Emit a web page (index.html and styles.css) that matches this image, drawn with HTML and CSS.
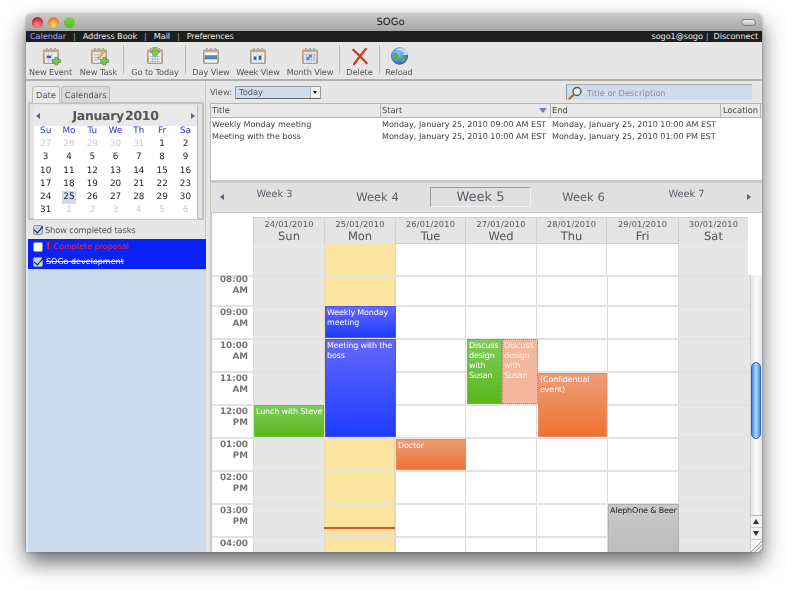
FILE: index.html
```html
<!DOCTYPE html>
<html lang="en">
<head>
<meta charset="utf-8">
<title>SOGo</title>
<link rel="stylesheet" href="styles.css">
</head>
<body>
<svg class="defs" width="0" height="0" aria-hidden="true">
  <defs>
    <linearGradient id="tan" x1="0" y1="0" x2="0" y2="1"><stop offset="0" stop-color="#d8b48a"/><stop offset="1" stop-color="#a98a66"/></linearGradient>
    <radialGradient id="globe" cx=".4" cy=".35" r=".7"><stop offset="0" stop-color="#8fd0f5"/><stop offset="1" stop-color="#1a5cb0"/></radialGradient>
    <symbol id="cal" viewBox="0 0 20 20">
      <rect x="1" y="3" width="18" height="16.5" rx="1" fill="url(#tan)" stroke="#8e7a62" stroke-width=".6"/>
      <rect x="2.5" y="6" width="15" height="12.5" fill="#eef2f8"/>
      <g stroke="#5a5a5a" stroke-width="1" fill="none"><path d="M5 .8v3.6M10 .8v3.6M15 .8v3.6"/></g>
      <g fill="#fff" stroke="#777" stroke-width=".4"><circle cx="5" cy="3" r="1"/><circle cx="10" cy="3" r="1"/><circle cx="15" cy="3" r="1"/></g>
    </symbol>
    <symbol id="plus" viewBox="0 0 10 10">
      <path d="M3.4.6h3.2v2.8h2.8v3.2H6.6v2.8H3.4V6.600H.6V3.400h2.800z" fill="#7cc65c" stroke="#3f8a2a" stroke-width=".7"/>
    </symbol>
  </defs>
</svg>
<div class="window">
  <header class="titlebar">
    <div class="lights"><i class="light red"></i><i class="light amber"></i><i class="light green"></i></div>
    <div class="title">SOGo</div>
    <i class="pill"></i>
  </header>
  <nav class="menubar">
    <div class="menu-left"><a class="current">Calendar</a><b>|</b><a>Address Book</a><b>|</b><a>Mail</a><b>|</b><a>Preferences</a></div>
    <div class="menu-right"><a>sogo1@sogo</a><b>|</b><a>Disconnect</a></div>
  </nav>
  <div class="toolbar">
    <div class="tool w-event">
      <svg class="icon" viewBox="0 0 24 22"><use href="#cal" x="2" y="0" width="20" height="20"/><path d="M6 9h8M6 12h8M6 15h8M9 7v10M13 7v10" stroke="#9fb3d8" stroke-width=".6"/><rect x="7" y="10" width="5" height="3" fill="#2f5fb0"/><use href="#plus" x="13" y="11" width="11" height="11"/></svg>
      <span>New Event</span>
    </div>
    <div class="tool w-task">
      <svg class="icon" viewBox="0 0 24 22"><use href="#cal" x="2" y="0" width="20" height="20"/><path d="M6 9h6M6 12h6M6 15h4" stroke="#7b8aa0" stroke-width=".8"/><path d="M10 14 L17 3 L19.500 4.500 L12 15.500z" fill="#e7c04f" stroke="#8a6d2b" stroke-width=".5"/><use href="#plus" x="13" y="11" width="11" height="11"/></svg>
      <span>New Task</span>
    </div>
    <i class="sep"></i>
    <div class="tool w-today">
      <svg class="icon" viewBox="0 0 24 22"><use href="#cal" x="2" y="0" width="20" height="20"/><path d="M6 11h12M6 14h12M6 17h12M9 8v10M12 8v10M15 8v10" stroke="#88a0cc" stroke-width=".7"/><path d="M9.500 0h5v5h3.500l-6 6.500-6-6.500h3.500z" fill="#84c85e" stroke="#47902f" stroke-width=".6"/></svg>
      <span>Go to Today</span>
    </div>
    <i class="sep"></i>
    <div class="tool w-day">
      <svg class="icon" viewBox="0 0 24 22"><use href="#cal" x="2" y="0" width="20" height="20"/><rect x="5" y="10" width="14" height="4" fill="#5a86c8" stroke="#2f5fa8" stroke-width=".5"/></svg>
      <span>Day View</span>
    </div>
    <div class="tool w-week">
      <svg class="icon" viewBox="0 0 24 22"><use href="#cal" x="2" y="0" width="20" height="20"/><path d="M7 7v11M10 7v11M13 7v11M16 7v11" stroke="#9fb3d8" stroke-width=".6"/><rect x="7" y="11" width="3" height="4" fill="#2f5fa8"/><rect x="13" y="10" width="3" height="5" fill="#2f5fa8"/></svg>
      <span>Week View</span>
    </div>
    <div class="tool w-month">
      <svg class="icon" viewBox="0 0 24 22"><use href="#cal" x="2" y="0" width="20" height="20"/><path d="M5 9h14M5 12h14M5 15h14M8 7v11M11 7v11M14 7v11M17 7v11" stroke="#88a0cc" stroke-width=".7"/><rect x="11" y="9" width="3" height="3" fill="#4a76bc"/><rect x="8" y="12" width="3" height="3" fill="#4a76bc"/></svg>
      <span>Month View</span>
    </div>
    <i class="sep"></i>
    <div class="tool w-delete">
      <svg class="icon" viewBox="0 0 24 22"><path d="M4 3 Q12 10 20 19 M19 2 Q12 10 5 20" fill="none" stroke="#cf3a28" stroke-width="2.800" stroke-linecap="round"/></svg>
      <span>Delete</span>
    </div>
    <i class="sep"></i>
    <div class="tool w-reload">
      <svg class="icon globe-icon" viewBox="0 0 24 22"><circle cx="12" cy="11" r="9.500" fill="url(#globe)"/><path d="M5 9c3-3 5-1 6 1s-2 4-3 6c-2-1-3-4-3-7zM14 13c2-1 5-1 6-1-1 3-3 5-5 6-1-2-2-3-1-5z" fill="#5fae3f"/><path d="M8 4c4-3 9-2 12 2l1-2v6h-6l2-2c-2-3-6-4-9-4z" fill="#bfe4fa"/></svg>
      <span>Reload</span>
    </div>
  </div>
  <div class="content">
    <aside class="sidebar">
      <div class="tabs"><span class="tab active">Date</span><span class="tab">Calendars</span></div>
      <div class="datebox">
        <div class="minical">
          <div class="mini-head"><i class="tri left"></i><div class="mini-title"><span>January</span> <span>2010</span></div><i class="tri right"></i></div>
          <div class="mini-grid">
            <b>Su</b><b>Mo</b><b>Tu</b><b>We</b><b>Th</b><b>Fr</b><b>Sa</b>
            <s>27</s><s>28</s><s>29</s><s>30</s><s>31</s><span>1</span><span>2</span>
            <span>3</span><span>4</span><span>5</span><span>6</span><span>7</span><span>8</span><span>9</span>
            <span>10</span><span>11</span><span>12</span><span>13</span><span>14</span><span>15</span><span>16</span>
            <span>17</span><span>18</span><span>19</span><span>20</span><span>21</span><span>22</span><span>23</span>
            <span>24</span><span class="sel">25</span><span>26</span><span>27</span><span>28</span><span>29</span><span>30</span>
            <span>31</span><s>1</s><s>2</s><s>3</s><s>4</s><s>5</s><s>6</s>
          </div>
        </div>
      </div>
      <label class="show-completed"><i class="check on"></i>Show completed tasks</label>
      <div class="tasks">
        <div class="task urgent"><i class="check"></i><em>!</em><span>Complete proposal</span></div>
        <div class="task done"><i class="check on"></i><span>SOGo development</span></div>
      </div>
    </aside>
    <main class="main">
      <div class="viewrow">
        <label class="viewlabel">View:</label>
        <div class="select"><span>Today</span><i class="select-btn"></i></div>
        <div class="search">
          <svg class="lens" viewBox="0 0 16 14"><circle cx="9" cy="5.500" r="4" fill="#e8f0f8" stroke="#555" stroke-width="1.300"/><path d="M6 8.500 1.500 12.500" stroke="#a86a2a" stroke-width="2.200" stroke-linecap="round"/></svg>
          <span>Title or Description</span>
        </div>
      </div>
      <div class="list">
        <div class="list-head">
          <span class="c-title">Title</span>
          <span class="c-start">Start<i class="sort"></i></span>
          <span class="c-end">End</span>
          <span class="c-loc">Location</span>
        </div>
        <div class="list-row"><span class="c-title">Weekly Monday meeting</span><span class="c-start">Monday, January 25, 2010 09:00 AM EST</span><span class="c-end">Monday, January 25, 2010 10:00 AM EST</span></div>
        <div class="list-row"><span class="c-title">Meeting with the boss</span><span class="c-start">Monday, January 25, 2010 10:00 AM EST</span><span class="c-end">Monday, January 25, 2010 01:00 PM EST</span></div>
      </div>
      <div class="weeknav">
        <i class="tri left"></i>
        <span class="wk w-s">Week 3</span>
        <span class="wk w-m">Week 4</span>
        <span class="wk w-l">Week 5</span>
        <span class="wk w-m">Week 6</span>
        <span class="wk w-s">Week 7</span>
        <i class="tri right"></i>
      </div>
      <div class="calendar">
        <div class="dayhead">
          <div class="gutter"></div>
          <div class="dh"><small>24/01/2010</small>Sun</div>
          <div class="dh"><small>25/01/2010</small>Mon</div>
          <div class="dh"><small>26/01/2010</small>Tue</div>
          <div class="dh"><small>27/01/2010</small>Wed</div>
          <div class="dh"><small>28/01/2010</small>Thu</div>
          <div class="dh"><small>29/01/2010</small>Fri</div>
          <div class="dh"><small>30/01/2010</small>Sat</div>
        </div>
        <div class="allday">
          <div class="gutter"></div><div class="off"></div><div class="today"></div><div></div><div></div><div></div><div></div><div class="off"></div>
        </div>
        <div class="hours-wrap">
          <div class="hours">
            <div class="hr first"><div class="t">08:00<br>AM</div><div class="off"></div><div class="today"></div><div></div><div></div><div></div><div></div><div class="off"></div></div>
            <div class="hr"><div class="t">09:00<br>AM</div><div class="off"></div><div class="today"></div><div></div><div></div><div></div><div></div><div class="off"></div></div>
            <div class="hr"><div class="t">10:00<br>AM</div><div class="off"></div><div class="today"></div><div></div><div></div><div></div><div></div><div class="off"></div></div>
            <div class="hr"><div class="t">11:00<br>AM</div><div class="off"></div><div class="today"></div><div></div><div></div><div></div><div></div><div class="off"></div></div>
            <div class="hr"><div class="t">12:00<br>PM</div><div class="off"></div><div class="today"></div><div></div><div></div><div></div><div></div><div class="off"></div></div>
            <div class="hr"><div class="t">01:00<br>PM</div><div class="off"></div><div class="today"></div><div></div><div></div><div></div><div></div><div class="off"></div></div>
            <div class="hr"><div class="t">02:00<br>PM</div><div class="off"></div><div class="today"></div><div></div><div></div><div></div><div></div><div class="off"></div></div>
            <div class="hr"><div class="t">03:00<br>PM</div><div class="off"></div><div class="today"></div><div></div><div></div><div></div><div></div><div class="off"></div></div>
            <div class="hr"><div class="t">04:00</div><div class="off"></div><div class="today"></div><div></div><div></div><div></div><div></div><div class="off"></div></div>
            <div class="ev blue e-weekly">Weekly Monday meeting</div>
            <div class="ev blue e-boss">Meeting with the boss</div>
            <div class="ev green e-lunch">Lunch with Steve</div>
            <div class="ev orange e-doctor">Doctor</div>
            <div class="ev green e-discuss">Discuss design with Susan</div>
            <div class="ev pale e-discuss2">Discuss design with Susan</div>
            <div class="ev orange e-conf">(Confidential event)</div>
            <div class="ev gray e-aleph">AlephOne &amp; Beer</div>
            <i class="nowline"></i>
          </div>
          <div class="scrollbar">
            <div class="track"><i class="thumb"></i></div>
            <div class="sb-btn up"></div>
            <div class="sb-btn down"></div>
            <div class="grip"></div>
          </div>
        </div>
      </div>
    </main>
  </div>
</div>
</body>
</html>
```
FILE: styles.css
```css
* { box-sizing: border-box; }
html, body { margin: 0; padding: 0; background: #fff; }
body { padding: 14px 0 0 26px; height: 590px; overflow: hidden; font-family: "DejaVu Sans", "Liberation Sans", sans-serif; font-size: 8.5px; color: #4a4a4a; text-rendering: geometricPrecision; }
i, em, s { font-style: normal; text-decoration: none; }
.defs { position: absolute; }

.window { width: 736px; height: 538px; background: #e6e6e6; border-radius: 5px 5px 0 0; box-shadow: 0 10px 22px rgba(0,0,0,.6), 0 0 3px rgba(0,0,0,.3); overflow: hidden; display: flex; flex-direction: column; filter: blur(.3px); }

.titlebar { height: 17px; flex: none; background: linear-gradient(#c9c9c9, #a6a6a6); display: flex; align-items: center; position: relative; }
.lights { display: flex; gap: 5px; padding-left: 6px; }
.light { width: 11px; height: 11px; border-radius: 50%; display: block; }
.red { background: radial-gradient(circle at 50% 75%, #ff9a9a, #c3282c 70%); }
.amber { background: radial-gradient(circle at 50% 75%, #ffd68a, #de7f22 70%); }
.green { background: radial-gradient(circle at 50% 75%, #c0ee92, #58a23a 70%); }
.title { flex: 1; text-align: center; font-size: 10px; color: #222; padding-right: 35px; }
.pill { width: 15px; height: 7px; border-radius: 4px; border: 1px solid #777; background: linear-gradient(#f2f2f2, #bbb); margin-right: 6px; }

.menubar { height: 11px; flex: none; background: #1e1e1e; color: #e8e8e8; display: flex; justify-content: space-between; align-items: center; font-size: 8.200px; letter-spacing: -.1px; line-height: 11px; padding: 0 4px 0 4px; }
.menubar b { font-weight: normal; color: #aaa; margin: 0 7px; }
.menu-right b { margin: 0 5px 0 3px; }
.current { color: #a9a9ff; }

.toolbar { height: 39px; flex: none; background: #e6e6e6; border-bottom: 2px solid #b0b0b0; display: flex; padding-left: 1px; }
.tool { display: flex; flex-direction: column; align-items: center; font-size: 8.200px; letter-spacing: -.1px; color: #555; white-space: nowrap; padding-top: 5px; }
.tool span { line-height: 12px; }
.icon { width: 20px; height: 19px; display: block; flex: none; }
.globe-icon { width: 23px; height: 20px; margin: -1px 0 0; }
.w-event { width: 47px; } .w-task { width: 49px; } .w-today { width: 60px; margin-left: 1px; }
.w-day { width: 48px; margin-left: 1px; } .w-week { width: 46px; } .w-month { width: 58px; }
.w-delete { width: 39px; } .w-reload { width: 38px; }
.sep { width: 1px; height: 29px; margin-top: 3px; background: #b9b9b9; flex: none; }

.content { flex: 1; display: flex; min-height: 0; }
.sidebar { width: 180px; flex: none; display: flex; flex-direction: column; padding: 5px 0 0 2px; border-right: 1px solid #c6c6c6; }
.tabs { display: flex; height: 16px; padding-left: 4px; gap: 1px; }
.tab { height: 16px; padding: 0 3px; line-height: 16px; background: #d9d9d9; border: 1px solid #bcbcbc; border-bottom: 0; border-radius: 3px 3px 0 0; font-size: 8.300px; color: #555; }
.tab.active { background: #ebebeb; padding: 0 3px; height: 17px; position: relative; z-index: 1; }
.datebox { height: 118px; width: 176px; border: 2px solid #c4c4c4; padding: 1px 4px 1px 4px; background: #e3e3e3; flex: none; }
.minical { background: #fff; height: 114px; border-right: 1px solid #bbb; }
.mini-head { height: 21px; background: #e9e9e9; display: flex; align-items: center; justify-content: space-between; padding: 0 2px 0 2px; }
.mini-title { font-size: 12.500px; font-weight: bold; color: #555; letter-spacing: -.3px; word-spacing: -3px; }
.mini-grid { display: grid; grid-template-columns: repeat(7, 23.300px); grid-auto-rows: 13.200px; text-align: center; font-size: 8.800px; line-height: 13px; color: #222; margin-top: -1px; }
.mini-grid b { font-weight: normal; color: #2b33e0; }
.mini-grid s { color: #ccc; }
.mini-grid .sel { background: #cfdcec; margin: 0 5px; }
.tri { display: block; width: 0; height: 0; border-style: solid; flex: none; }
.tri.left { border-width: 3px 4px 3px 0; border-color: transparent #46688c transparent transparent; }
.tri.right { border-width: 3px 0 3px 4px; border-color: transparent transparent transparent #46688c; }

.show-completed { height: 19px; display: flex; align-items: center; gap: 2px; padding-left: 5px; font-size: 8.300px; letter-spacing: -.15px; color: #555; flex: none; }
.check { display: block; width: 10px; height: 10px; border: 1px solid #7f9ab8; border-radius: 2px; background: #fff; flex: none; position: relative; }
.check.on { background: #b9d2ee; }
.check.on::after { content: ""; position: absolute; left: 2px; top: -2px; width: 4px; height: 8px; border: solid #111; border-width: 0 1.500px 1.500px 0; transform: rotate(40deg); }
.tasks { flex: 1; background: linear-gradient(#0a22f5 30px, #ccdcec 30px); margin-right: -1px; }
.task { height: 15px; display: flex; align-items: center; gap: 3px; padding-left: 5px; color: #fff; font-size: 8px; white-space: pre; }
.task.urgent { color: #ff2a2a; }
.task.done span { text-decoration: line-through; }
.task em { font-weight: bold; font-size: 10px; }

.main { flex: 1; min-width: 0; display: flex; flex-direction: column; padding-left: 4px; }
.viewrow { height: 22px; flex: none; display: flex; align-items: center; font-size: 8.300px; color: #555; }
.viewlabel { width: 25px; }
.select { width: 86px; height: 13px; background: #cfdcec; border: 1px solid #9a9a9a; border-bottom-color: #666; display: flex; justify-content: space-between; align-items: center; padding-left: 3px; }
.select-btn { width: 10px; height: 11px; background: #f4f4f4; border-left: 1px solid #aaa; position: relative; }
.select-btn::after { content: ""; position: absolute; left: 2px; top: 4px; border-style: solid; border-width: 3px 2.500px 0; border-color: #111 transparent transparent; }
.search { width: 186px; height: 16px; margin-left: 245px; background: #cfdcec; border-left: 1px solid #999; border-top: 1px solid #aaa; display: flex; align-items: center; gap: 3px; font-size: 8.300px; color: #8a9198; padding-left: 1px; }
.lens { width: 16px; height: 14px; flex: none; }

.list { height: 80px; flex: none; background: #fff; border-bottom: 3px solid #c8c8c8; border-left: 1px solid #bbb; }
.list-head { height: 15px; display: flex; background: #e9e9e9; border-top: 1px solid #b5b5b5; border-bottom: 1px solid #b5b5b5; line-height: 13px; font-size: 8.300px; }
.list-head span { border-right: 1px solid #b5b5b5; position: relative; }
.list-row { height: 12px; display: flex; line-height: 12px; color: #3c3c3c; white-space: nowrap; font-size: 8.050px; }
.list-head + .list-row { margin-top: 1px; }
.c-title { width: 170px; padding-left: 1px; flex: none; }
.c-start { width: 170px; padding-left: 1px; flex: none; }
.c-end { width: 170px; padding-left: 1px; flex: none; }
.c-loc { width: 40px; padding-left: 2px; flex: none; }
.sort { position: absolute; right: 3px; top: 4px; border-style: solid; border-width: 5px 4px 0; border-color: #6d87a8 transparent transparent; }

.weeknav { height: 30px; flex: none; padding: 0 0 1px 12px; background: #e0e0e0; border-bottom: 1px solid #c4c4c4; border-left: 1px solid #c4c4c4; display: grid; grid-template-columns: 0 repeat(5, 103px) 0; align-items: center; color: #5a6068; }
.wk { text-align: center; white-space: nowrap; }
.w-s { font-size: 9.800px; padding-bottom: 5px; }
.w-m { font-size: 11.500px; }
.w-l { font-size: 13px; height: 20px; line-height: 19px; width: 101px; justify-self: center; border: 1px solid #f3f3f3; border-top-color: #999; border-left-color: #999; }
.weeknav .tri.left { margin-left: -3px; }
.weeknav .tri.right { margin-left: 9px; }

.calendar { flex: 1; min-height: 0; display: flex; flex-direction: column; background: #fff; border-left: 2px solid #c8c8c8; }
.dayhead, .allday { display: grid; grid-template-columns: 41px 71px 71px 70px 71px 70px 72px 70px; width: 536px; }
.dayhead { height: 30px; padding-top: 4px; flex: none; }
.dh { background: #e4e4e4; border-left: 1px solid #d0d0d0; border-top: 1px solid #d0d0d0; border-bottom: 1px solid #cfcfcf; text-align: center; font-size: 11.500px; line-height: 13px; color: #555; }
.dh small { display: block; font-size: 8.200px; line-height: 12px; letter-spacing: .2px; }
.allday { height: 32px; flex: none; }
.allday > div:not(.gutter) { border-left: 1px solid #dcdcdc; }
.off { background: #e6e6e6; }
.today { background: #fbe3a0; }

.hours-wrap { flex: 1; min-height: 0; display: flex; overflow: hidden; }
.hours { width: 538px; position: relative; overflow: hidden; flex: none; }
.hr { display: grid; height: 33px; border-top: 2px solid #e2e2e2; width: 538px; grid-template-columns: 41px 71px 71px 70px 71px 71px 71px 72px; }
.hr.first { height: 30px; }
.hr > div { border-left: 1px solid #dcdcdc; }
.hr .t { border-left: 0; text-align: right; padding: 1px 5px 0 0; font-size: 8.800px; line-height: 11px; color: #757575; font-weight: bold; }
.hr.first .t { padding-top: 0; margin-top: -2px; }
.hr > .today { border-left-color: #e8d9a8; border-right: 1px solid #e8d9a8; }

.ev { position: absolute; padding: 1px 0 1px 1px; color: #fff; font-size: 8px; letter-spacing: -.15px; line-height: 10px; border: 1px solid transparent; overflow: hidden; }
.blue { background: linear-gradient(#6567fb, #1c3cff); border-color: #4a55f0; }
.green { background: linear-gradient(#7fcc5a, #58b81c); border-color: #69bf3a; }
.orange { background: linear-gradient(#ee9c78, #ee7330); border-color: #ee8a5c; }
.pale { background: #f4b69c; border: 1px dotted #8a8a8a; color: #fff3ea; }
.gray { background: linear-gradient(#c9c9c9, #b9b9b9); border-color: #b0b0b0; color: #222; }
.e-weekly { left: 113px; top: 31px; width: 71px; height: 32px; }
.e-boss { left: 113px; top: 64px; width: 71px; height: 98px; }
.e-lunch { left: 42px; top: 130px; width: 70px; height: 32px; white-space: nowrap; }
.e-doctor { left: 184px; top: 164px; width: 70px; height: 31px; }
.e-discuss { left: 255px; top: 64px; width: 35px; height: 65px; }
.e-discuss2 { left: 290px; top: 64px; width: 36px; height: 65px; }
.e-conf { left: 326px; top: 98px; width: 69px; height: 64px; }
.e-aleph { left: 396px; top: 229px; width: 71px; height: 60px; white-space: nowrap; }
.nowline { position: absolute; left: 112px; top: 252px; width: 71px; height: 2px; background: #e0532a; }

.scrollbar { flex: 1; background: #f4f4f4; border-left: 1px solid #ccc; display: flex; flex-direction: column; position: relative; }
.track { flex: 1; padding-top: 87px; background: linear-gradient(90deg, #e4e4e4, #fafafa 50%, #e4e4e4); border-radius: 5px 5px 0 0; border-bottom: 1px solid #bbb; }
.thumb { display: block; width: 10px; height: 77px; border-radius: 5px; border: 1px solid #2c67c2; background: linear-gradient(90deg, #3f86e0, #b6d5f8 50%, #4d90e8); }
.sb-btn { height: 12px; flex: none; border-bottom: 1px solid #ccc; position: relative; background: #f2f2f2; }
.sb-btn::after { content: ""; position: absolute; left: 2px; top: 3px; border-style: solid; border-color: transparent; }
.up::after { border-width: 0 3px 5px; border-bottom-color: #333; }
.down::after { border-width: 5px 3px 0; border-top-color: #333; }
.grip { height: 12px; flex: none; background: linear-gradient(135deg, #f4f4f4 50%, transparent 50%), repeating-linear-gradient(135deg, #e8e8e8 0 2px, #999 2px 3px); }
```
